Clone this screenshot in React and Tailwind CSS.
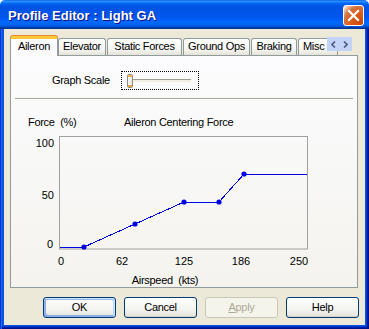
import React from "react";

const otherTabs = [
  { label: "Elevator", cls: "w-[48px] text-center" },
  { label: "Static Forces", cls: "w-[75px] ml-px text-center" },
  { label: "Ground Ops", cls: "w-[67px] ml-px text-center" },
  { label: "Braking", cls: "w-[46px] ml-px text-center" },
  { label: "Misc", cls: "w-[40px] ml-px pl-[4px]" },
];

// plot points in page pixels (airspeed -> x, force -> y)
const points = [
  [84, 247],
  [135, 224],
  [184, 202],
  [219, 202],
  [244, 174],
];

const xTicks = [
  { x: 61, t: "0" },
  { x: 122, t: "62" },
  { x: 184, t: "125" },
  { x: 241, t: "186" },
  { x: 299, t: "250" },
];

function Button({ children, isDefault, disabled }) {
  let cls =
    "w-[73px] h-[21px] rounded-[3px] border flex items-center justify-center text-[11px] leading-[13px] tracking-[-0.3px] ";
  if (disabled) {
    cls += "border-[#c9c7ba] bg-[#f5f4ea] text-[#aca899]";
  } else if (isDefault) {
    cls +=
      "border-[#003c74] text-black bg-[linear-gradient(to_bottom,#ffffff,#f3f3ef_60%,#e3e2da)] shadow-[inset_-1px_1px_#cee7ff,inset_1px_2px_#98b8ea,inset_-2px_2px_#bcd4f6,inset_1px_-1px_#89ade4,inset_2px_-2px_#89ade4]";
  } else {
    cls +=
      "border-[#003c74] text-black bg-[linear-gradient(to_bottom,#ffffff,#f3f3ef_60%,#e3e2da)] shadow-[inset_0_-1px_#d6d0c5]";
  }
  return <div className={cls}>{children}</div>;
}

export default function App() {
  const line = [[60, 247], ...points, [307, 174]].map((p) => p.join(",")).join(" ");

  return (
    <div className="w-[369px] h-[329px] flex flex-col rounded-t-[5px] overflow-hidden font-['Liberation_Sans',Arial,sans-serif]">
      {/* title bar */}
      <div className="h-[29px] shrink-0 flex items-start pl-[8px] pr-[5px] bg-[linear-gradient(to_bottom,#0058ee_0%,#3593ff_4%,#288eff_6%,#127dff_8%,#036ffc_10%,#0262ee_14%,#0057e5_20%,#0054e3_24%,#0055eb_56%,#005bf5_66%,#026afe_76%,#0062ef_86%,#0052d6_92%,#0040ab_94%,#003092_100%)]">
        <span className="mt-[8px] text-[13px] leading-[16px] font-bold text-white [text-shadow:1px_1px_#0f1089]">
          Profile Editor : Light GA
        </span>
        <div className="ml-auto mt-[5px] w-[21px] h-[21px] rounded-[3px] border border-white flex items-center justify-center bg-[radial-gradient(circle_at_90%_90%,#cc4600_0%,#dc6527_55%,#cd7546_70%,#ffccb2_90%,#ffffff_100%)]">
          <svg width="13" height="13" viewBox="0 0 13 13">
            <path d="M2 2 L11 11 M11 2 L2 11" stroke="#fff" strokeWidth="2.2" strokeLinecap="square" />
          </svg>
        </div>
      </div>

      {/* window frame + client area */}
      <div className="flex-1 flex flex-col px-[4px] pb-[4px] bg-[#0855dd] shadow-[inset_1px_0_#0831d9,inset_2px_0_#166aee,inset_-1px_-1px_#00138c,inset_-2px_-2px_#001ea0,inset_-3px_-3px_#003bda]">
        <div className="flex-1 flex flex-col bg-[#ece9d8] px-[6px] pt-[7px] text-[11px] leading-[13px] text-black">
          {/* tabs */}
          <div className="relative flex items-end h-[19px]">
            <div className="relative z-10 h-[20px] w-[48px] -mb-px pt-px text-center tracking-[-0.3px] bg-[#fcfcfe] border-x border-[#919b9c] border-t-[3px] border-t-[#ffc73c] rounded-t-[3px] shadow-[0_-1px_#e68b2c]">
              Aileron
            </div>
            {otherTabs.map((t) => (
              <div
                key={t.label}
                className={`${t.cls} h-[17px] pt-[1px] whitespace-nowrap tracking-[-0.3px] border border-b-0 border-[#919b9c] rounded-t-[3px] bg-[linear-gradient(to_bottom,#ffffff,#f3f3ef_70%,#e4e2d8)]`}
              >
                {t.label}
              </div>
            ))}
            <div className="absolute left-[317px] top-[1px] w-[25px] h-[14px] flex items-center justify-around bg-[#c3d3f8]">
              <svg width="5" height="7" viewBox="0 0 5 7">
                <path d="M4 0.5 L1 3.5 L4 6.5" fill="none" stroke="#4a5b7e" strokeWidth="1.6" />
              </svg>
              <svg width="5" height="7" viewBox="0 0 5 7">
                <path d="M1 0.5 L4 3.5 L1 6.5" fill="none" stroke="#4a5b7e" strokeWidth="1.6" />
              </svg>
            </div>
          </div>

          {/* tab panel */}
          <div className="h-[233px] w-[348px] flex flex-col border border-[#919b9c] bg-[linear-gradient(to_bottom,#fcfcfe,#f4f3ee)]">
            <div className="mt-[15px] h-[19px] flex items-center">
              <span className="ml-[41px] w-[69px] tracking-[-0.3px]">Graph Scale</span>
              <div className="w-[78px] h-[19px] border border-dotted border-black flex items-center pl-[5px]">
                <div className="w-[6px] h-[14px] flex flex-col rounded-[2px] border border-[#8e8b82] overflow-hidden">
                  <div className="h-[2px] bg-[#f1b44a]" />
                  <div className="flex-1 bg-[linear-gradient(to_right,#ffffff,#e6e4dc)]" />
                  <div className="h-[2px] bg-[#e8a234]" />
                </div>
                <div className="w-[58px] h-[3px] mt-[-1px] border-t border-[#9d9d95] bg-[#f1efe2]" />
              </div>
            </div>

            <div className="mt-[8px] mx-[4px] h-[2px] border-t border-[#aca899] bg-white" />

            <div className="mt-[16px] h-[13px] flex whitespace-pre tracking-[-0.3px]">
              <span className="ml-[17px] w-[96px]">Force  (%)</span>
              <span>Aileron Centering Force</span>
            </div>

            <svg width="346" height="158" viewBox="11 129 346 158" className="block">
              <rect x="59.5" y="136.5" width="248" height="112.5" fill="none" stroke="#a0a0a0" />
              <polyline points={line} fill="none" stroke="#0000e6" strokeWidth="1" shapeRendering="crispEdges" />
              {points.map(([x, y]) => (
                <circle key={x} cx={x} cy={y} r="2.6" fill="#0000e6" />
              ))}
              <g fontFamily="Liberation Sans, Arial, sans-serif" fontSize="11" fill="#000">
                <text x="54" y="147" textAnchor="end">100</text>
                <text x="54" y="199" textAnchor="end">50</text>
                <text x="53" y="248" textAnchor="end">0</text>
                {xTicks.map((t) => (
                  <text key={t.t} x={t.x} y="265" textAnchor="middle">
                    {t.t}
                  </text>
                ))}
                <text x="165" y="284" textAnchor="middle" letterSpacing="-0.3" xmlSpace="preserve">
                  Airspeed  (kts)
                </text>
              </g>
            </svg>
          </div>

          {/* buttons */}
          <div className="mt-[9px] flex justify-end gap-[8px]">
            <Button isDefault>OK</Button>
            <Button>Cancel</Button>
            <Button disabled>
              <span>
                <span className="underline">A</span>pply
              </span>
            </Button>
            <Button>Help</Button>
          </div>
        </div>
      </div>
    </div>
  );
}
